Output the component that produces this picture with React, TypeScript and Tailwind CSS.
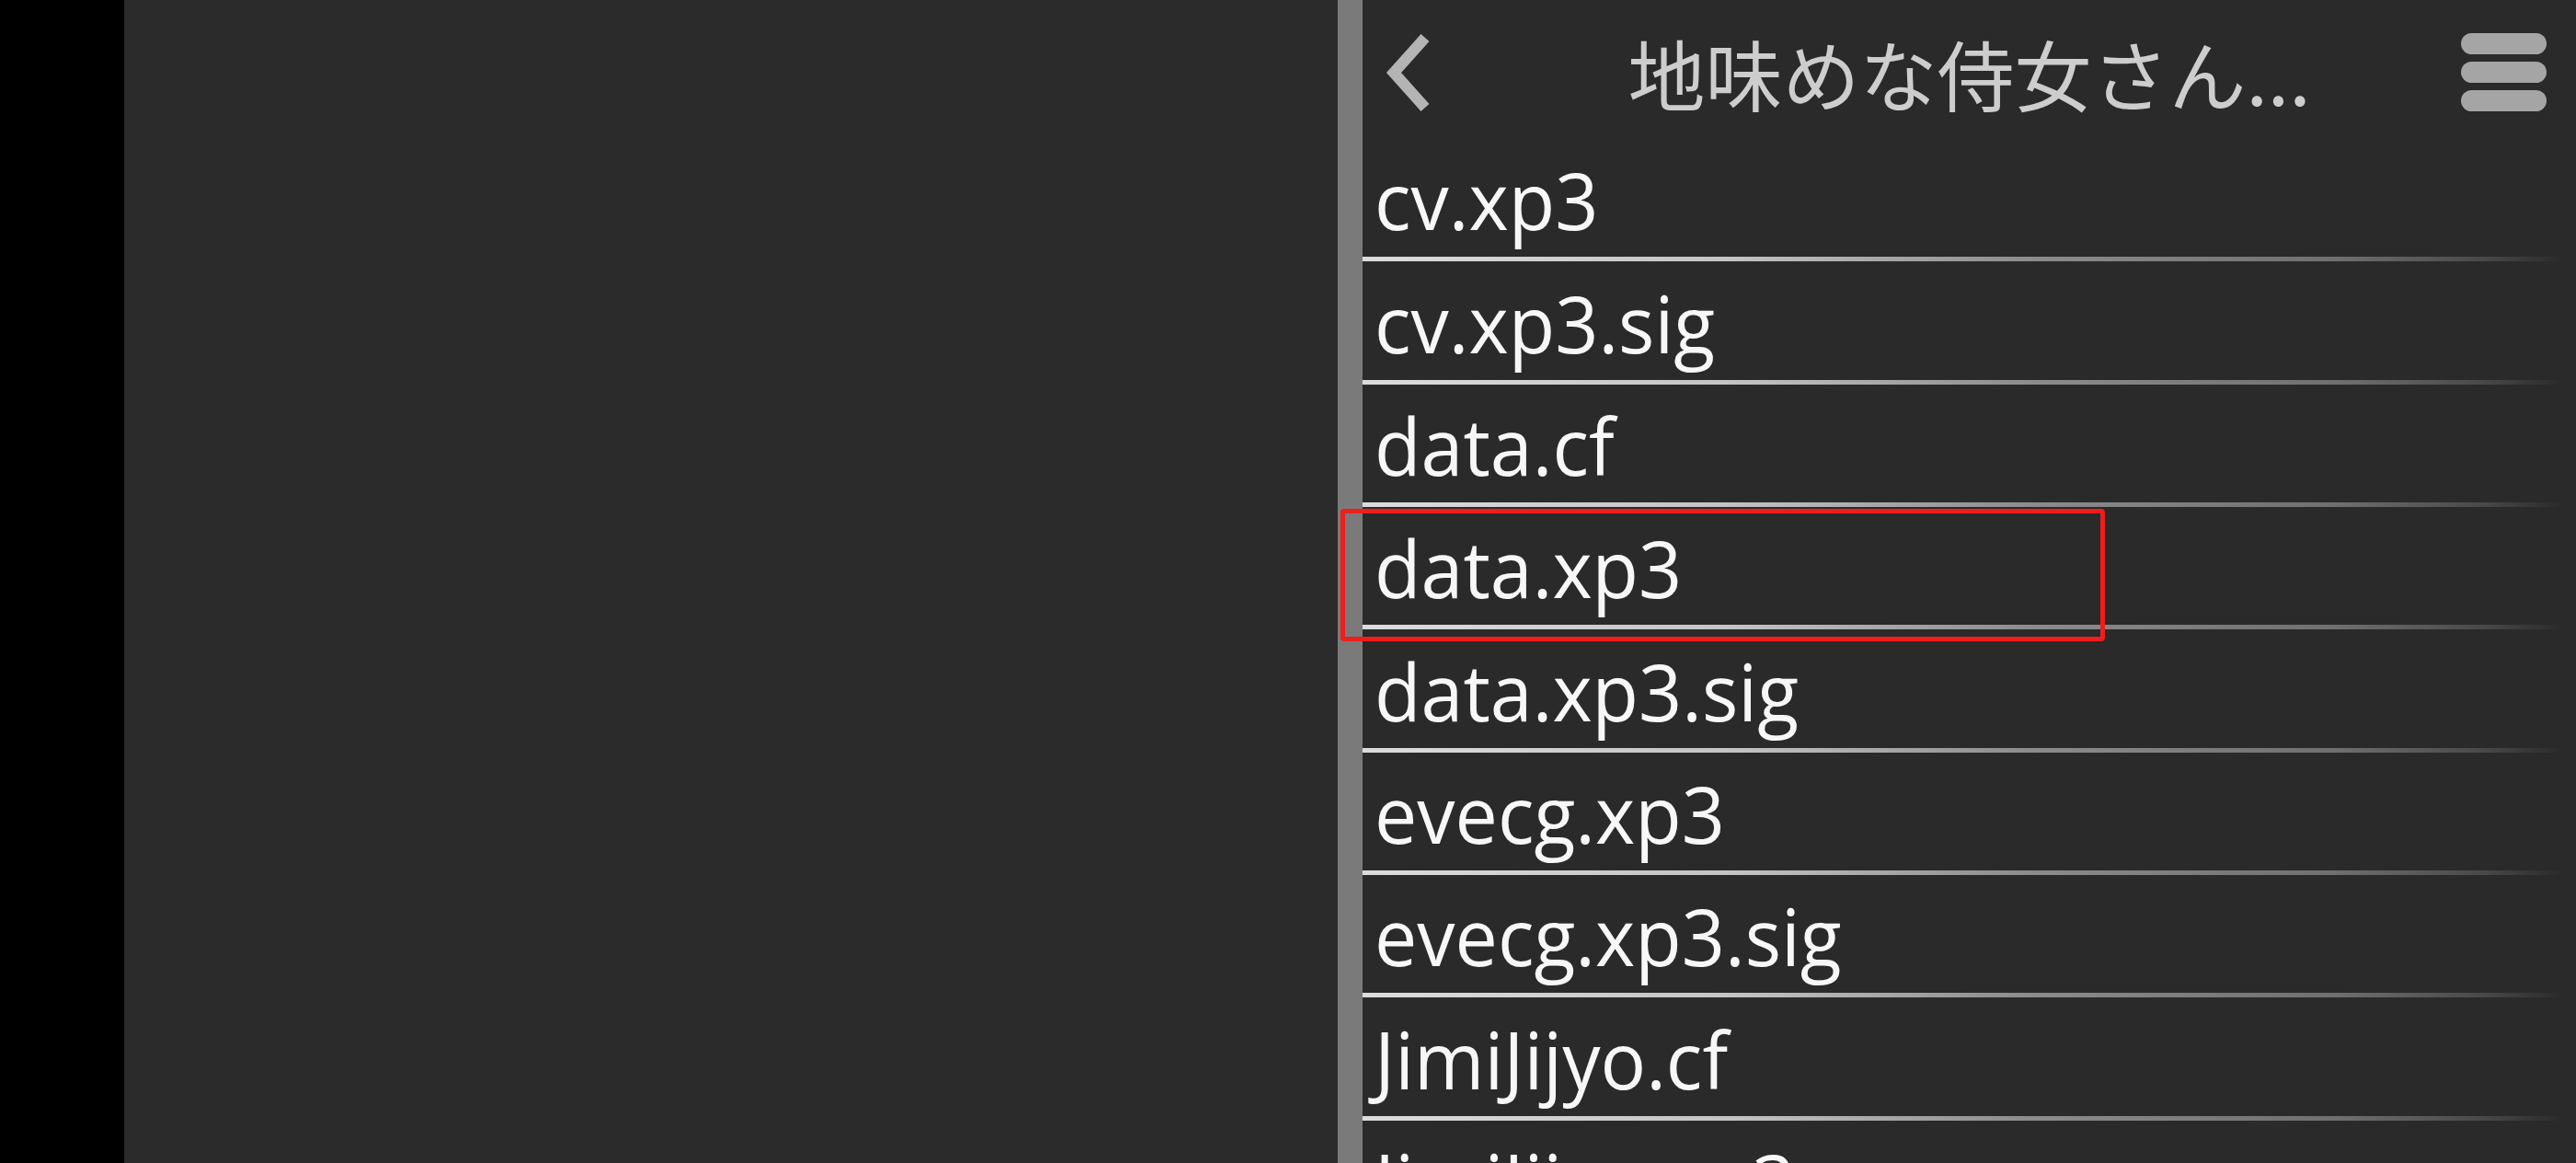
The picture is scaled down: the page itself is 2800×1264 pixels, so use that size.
import React from 'react';

const files = [
  'cv.xp3',
  'cv.xp3.sig',
  'data.cf',
  'data.xp3',
  'data.xp3.sig',
  'evecg.xp3',
  'evecg.xp3.sig',
  'JimiJijyo.cf',
  'JimiJijyo.xp3',
];

function BackIcon() {
  return (
    <svg width="56" height="92" viewBox="0 0 56 92" className="block">
      <polyline
        points="46,8 12,46 46,84"
        fill="none"
        stroke="#b4b4b4"
        strokeWidth="12"
        strokeLinejoin="miter"
      />
    </svg>
  );
}

function MenuIcon() {
  return (
    <div className="flex flex-col gap-[8px]">
      <div className="h-[23px] w-[93px] rounded-full bg-[#a5a5a5]" />
      <div className="h-[23px] w-[93px] rounded-full bg-[#a5a5a5]" />
      <div className="h-[23px] w-[93px] rounded-full bg-[#a5a5a5]" />
    </div>
  );
}

function FileRow({ name, selected }: { name: string; selected?: boolean }) {
  return (
    <div className="relative flex h-[133.33px] shrink-0 flex-col">
      <div className="flex flex-1 items-end pb-[19px] pl-[13px]">
        <span className="inline-block origin-left scale-x-[0.96] text-[86px] leading-none whitespace-nowrap text-[#f7f7f7]">
          {name}
        </span>
      </div>
      {/* separator */}
      <div className="h-[5px] w-full bg-[linear-gradient(to_right,#dcdcdc_0%,#c4c4c4_30%,#8c8c8c_55%,#707070_80%,#4a4a4a_92%,transparent_99%)]" />

      {/* highlight box */}
      {selected && (
        <div className="absolute -left-[24px] top-[2px] h-[144px] w-[831px] rounded-[4px] border-[5px] border-[#f01d1d]" />
      )}
    </div>
  );
}

export default function App() {
  return (
    <div
      className="flex h-[1264px] w-[2800px] overflow-hidden bg-[#2a2a2a]"
      style={{ fontFamily: '"Open Sans", "Noto Sans CJK JP", sans-serif' }}
    >
      {/* Left black strip */}
      <div className="w-[135px] shrink-0 bg-black" />

      {/* Empty left panel */}
      <div className="w-[1319px] shrink-0 bg-[#2b2b2b]" />

      {/* Divider */}
      <div className="w-[27px] shrink-0 bg-[#7a7a7a]" />

      {/* File list panel */}
      <div className="flex min-w-0 flex-1 flex-col bg-[#2a2a2a]">
        {/* Header */}
        <div className="grid h-[151px] shrink-0 grid-cols-[160px_1fr_160px] items-center pt-[6px]">
          <div className="pl-[22px]">
            <BackIcon />
          </div>
          <div
            className="text-center text-[84px] leading-none whitespace-nowrap text-[#cdcdcd]"
            style={{ fontFamily: '"Noto Sans CJK JP", "Open Sans", sans-serif' }}
          >
            地味めな侍女さん...
          </div>
          <div className="flex justify-end pr-[32px]">
            <MenuIcon />
          </div>
        </div>

        {/* Rows */}
        {files.map((f) => (
          <FileRow key={f} name={f} selected={f === 'data.xp3'} />
        ))}
      </div>
    </div>
  );
}
